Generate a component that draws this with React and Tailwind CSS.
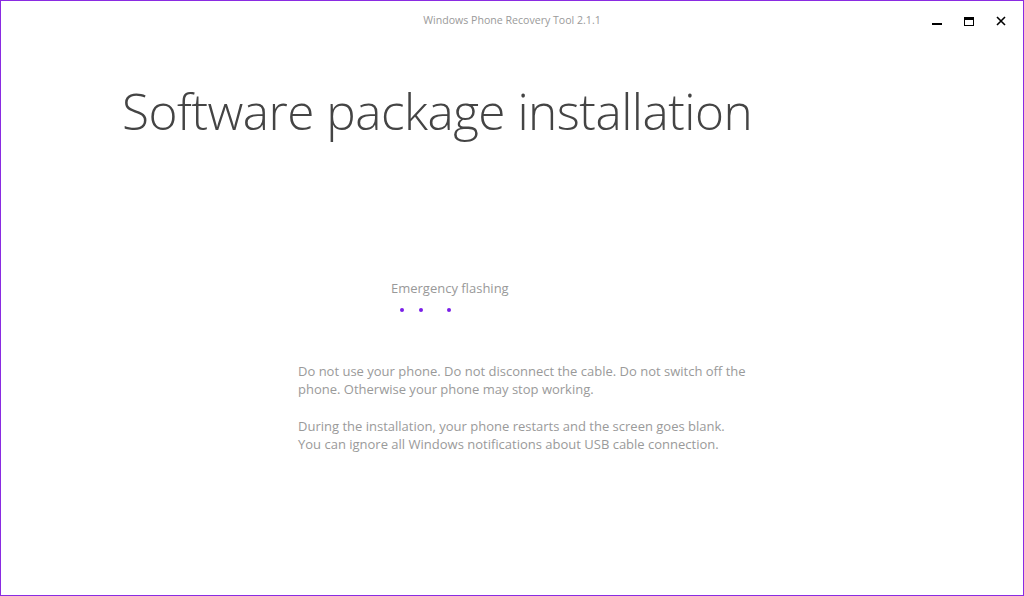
import React from "react";

export default function App() {
  return (
    <div className="w-[1024px] h-[596px] bg-white border border-[#8a2be2] flex flex-col overflow-hidden font-['Open_Sans',sans-serif]">
      <div className="h-[40px] flex items-center relative shrink-0">
        <p className="flex-1 text-center text-[10.6px] text-[#9a9a9a]">Windows Phone Recovery Tool 2.1.1</p>
        <div className="absolute right-[6px] top-[10px] flex items-center">
          <div className="w-[32px] h-[18px] flex items-center justify-center">
            <div className="w-[10px] h-[2px] bg-black mt-[8px]"></div>
          </div>
          <div className="w-[32px] h-[18px] flex items-center justify-center">
            <div className="w-[10px] h-[9px] border border-black border-t-[3px] mt-[2px]"></div>
          </div>
          <div className="w-[32px] h-[18px] flex items-center justify-center">
            <svg width="10" height="10" viewBox="0 0 10 10" className="mt-[2px]">
              <path d="M1 1L9 9M9 1L1 9" stroke="#000" strokeWidth="1.6" />
            </svg>
          </div>
        </div>
      </div>
      <div className="pl-[121px] pt-[35px]">
        <h1 className="text-[49.5px] font-light text-[#444] leading-[70px] tracking-[-0.5px]">Software package installation</h1>
      </div>
      <div className="pl-[390px] pt-[133px]">
        <p className="text-[13px] text-[#999] leading-[18px]">Emergency flashing</p>
        <div className="flex items-center h-[10px] mt-[8px] pl-[9px]">
          <span className="w-[4px] h-[4px] rounded-full bg-[#7a1fe8]"></span>
          <span className="w-[4px] h-[4px] rounded-full bg-[#7a1fe8] ml-[15px]"></span>
          <span className="w-[4px] h-[4px] rounded-full bg-[#7a1fe8] ml-[24px]"></span>
        </div>
      </div>
      <div className="pl-[297px] pt-[47px] text-[13px] text-[#9a9a9a] leading-[18px]">
        <p>Do not use your phone. Do not disconnect the cable. Do not switch off the<br />phone. Otherwise your phone may stop working.</p>
        <p className="mt-[19px]">During the installation, your phone restarts and the screen goes blank.<br />You can ignore all Windows notifications about USB cable connection.</p>
      </div>
    </div>
  );
}
